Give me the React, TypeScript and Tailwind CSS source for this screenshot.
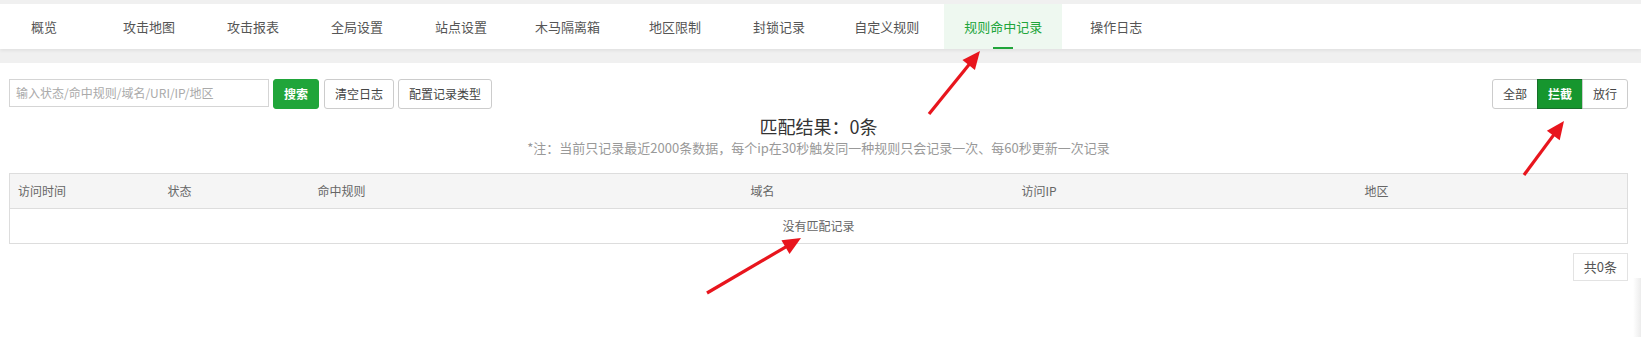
const tabs = [
  { label: '概览', ml: 'ml-[11px]' },
  { label: '攻击地图', ml: 'ml-[26px]' },
  { label: '攻击报表', ml: 'ml-[12px]' },
  { label: '全局设置', ml: 'ml-[12px]' },
  { label: '站点设置', ml: 'ml-[12px]' },
  { label: '木马隔离箱', ml: 'ml-[8px]' },
  { label: '地区限制', ml: 'ml-[9px]' },
  { label: '封锁记录', ml: 'ml-[12px]' },
  { label: '自定义规则', ml: 'ml-[9px]' },
  { label: '规则命中记录', ml: 'ml-[5px]', active: true },
  { label: '操作日志', ml: 'ml-[8px]' },
]

const columns = [
  { title: '访问时间', w: 'w-[150px]' },
  { title: '状态', w: 'w-[150px]' },
  { title: '命中规则', w: 'w-[433px]' },
  { title: '域名', w: 'w-[271px]' },
  { title: '访问IP', w: 'w-[343px]' },
  { title: '地区', w: '' },
]

// annotation arrows: tail -> tip
const arrows = [
  { x1: 929, y1: 114, x2: 980, y2: 51 },
  { x1: 1524, y1: 175, x2: 1564, y2: 121 },
  { x1: 707, y1: 293, x2: 801, y2: 238 },
]

function Arrow({ x1, y1, x2, y2 }: { x1: number; y1: number; x2: number; y2: number }) {
  const dx = x2 - x1
  const dy = y2 - y1
  const len = Math.hypot(dx, dy)
  const ux = dx / len
  const uy = dy / len
  const hl = 18
  const hw = 8
  const bx = x2 - ux * hl
  const by = y2 - uy * hl
  const pts = `${x2},${y2} ${bx - uy * hw},${by + ux * hw} ${bx + uy * hw},${by - ux * hw}`
  return (
    <g>
      <line x1={x1} y1={y1} x2={bx + ux * 2} y2={by + uy * 2} stroke="#e8151d" strokeWidth={3.2} />
      <polygon points={pts} fill="#e8151d" />
    </g>
  )
}

function App() {
  return (
    <div className="relative w-full h-[337px] overflow-hidden bg-white font-['Noto_Sans_CJK_SC',sans-serif] text-[12px] text-[#333]">
      <div className="bg-[#f0f0f0] pt-[4px] pb-[14px]">
        <div className="flex h-[45px] bg-white shadow-[0_2px_3px_rgba(0,0,0,0.06)]">
          {tabs.map((t) => (
            <div
              key={t.label}
              className={`${t.ml} relative flex h-full items-center px-[20px] text-[13px] ${
                t.active ? 'bg-[#eef8f0] text-[#20a53a]' : 'text-[#555]'
              }`}
            >
              {t.label}
              {t.active && <span className="absolute bottom-0 left-1/2 h-[2px] w-[20px] -translate-x-1/2 bg-[#20a53a]" />}
            </div>
          ))}
        </div>
      </div>

      <div className="pl-[9px] pr-[13px] pt-[16px]">
        <div className="flex items-start justify-between">
          <div className="flex items-start">
            <div className="flex h-[28px] w-[260px] items-center border border-[#d5d5d5] px-[6px] text-[12px] text-[#aaa]">
              输入状态/命中规则/域名/URI/IP/地区
            </div>
            <button className="ml-[4px] h-[30px] rounded-[3px] border border-[#20a53a] bg-[#20a53a] px-[10px] text-[12px] font-bold text-white">
              搜索
            </button>
            <button className="ml-[5px] h-[30px] rounded-[3px] border border-[#ccc] bg-white px-[10px] text-[12px] text-[#444]">
              清空日志
            </button>
            <button className="ml-[4px] h-[30px] rounded-[3px] border border-[#ccc] bg-white px-[10px] text-[12px] text-[#444]">
              配置记录类型
            </button>
          </div>
          <div className="flex h-[30px]">
            <button className="rounded-l-[3px] border border-[#ccc] bg-white px-[10px] text-[12px] text-[#444]">全部</button>
            <button className="-ml-px border border-[#176f2a] bg-[#16962e] px-[10px] text-[12px] font-bold text-white">拦截</button>
            <button className="-ml-px rounded-r-[3px] border border-[#ccc] bg-white px-[10px] text-[12px] text-[#444]">放行</button>
          </div>
        </div>

        <div className="mt-[5px] text-center text-[18px] leading-[24px] text-[#333]">匹配结果：0条</div>
        <div className="text-center text-[13px] leading-[20px] text-[#999]">
          *注：当前只记录最近2000条数据，每个ip在30秒触发同一种规则只会记录一次、每60秒更新一次记录
        </div>

        <table className="mt-[15px] w-full table-fixed border-collapse border border-[#ddd]">
          <thead>
            <tr className="h-[35px] bg-[#f5f5f5]">
              {columns.map((c) => (
                <th key={c.title} className={`${c.w} border-b border-[#ddd] px-[8px] text-left text-[12px] font-normal text-[#666]`}>
                  {c.title}
                </th>
              ))}
            </tr>
          </thead>
          <tbody>
            <tr className="h-[35px]">
              <td colSpan={6} className="text-center text-[12px] text-[#666]">
                没有匹配记录
              </td>
            </tr>
          </tbody>
        </table>

        <div className="mt-[9px] flex justify-end">
          <div className="flex h-[28px] items-center border border-[#e3e3e3] px-[10px] text-[13px] text-[#555]">共0条</div>
        </div>
      </div>

      <div className="absolute right-0 top-[278px] h-[59px] w-[8px] bg-linear-to-r from-white to-[#ececec]" />

      <svg className="pointer-events-none absolute left-0 top-0" width="1641" height="337">
        {arrows.map((a, i) => (
          <Arrow key={i} {...a} />
        ))}
      </svg>
    </div>
  )
}

export default App
